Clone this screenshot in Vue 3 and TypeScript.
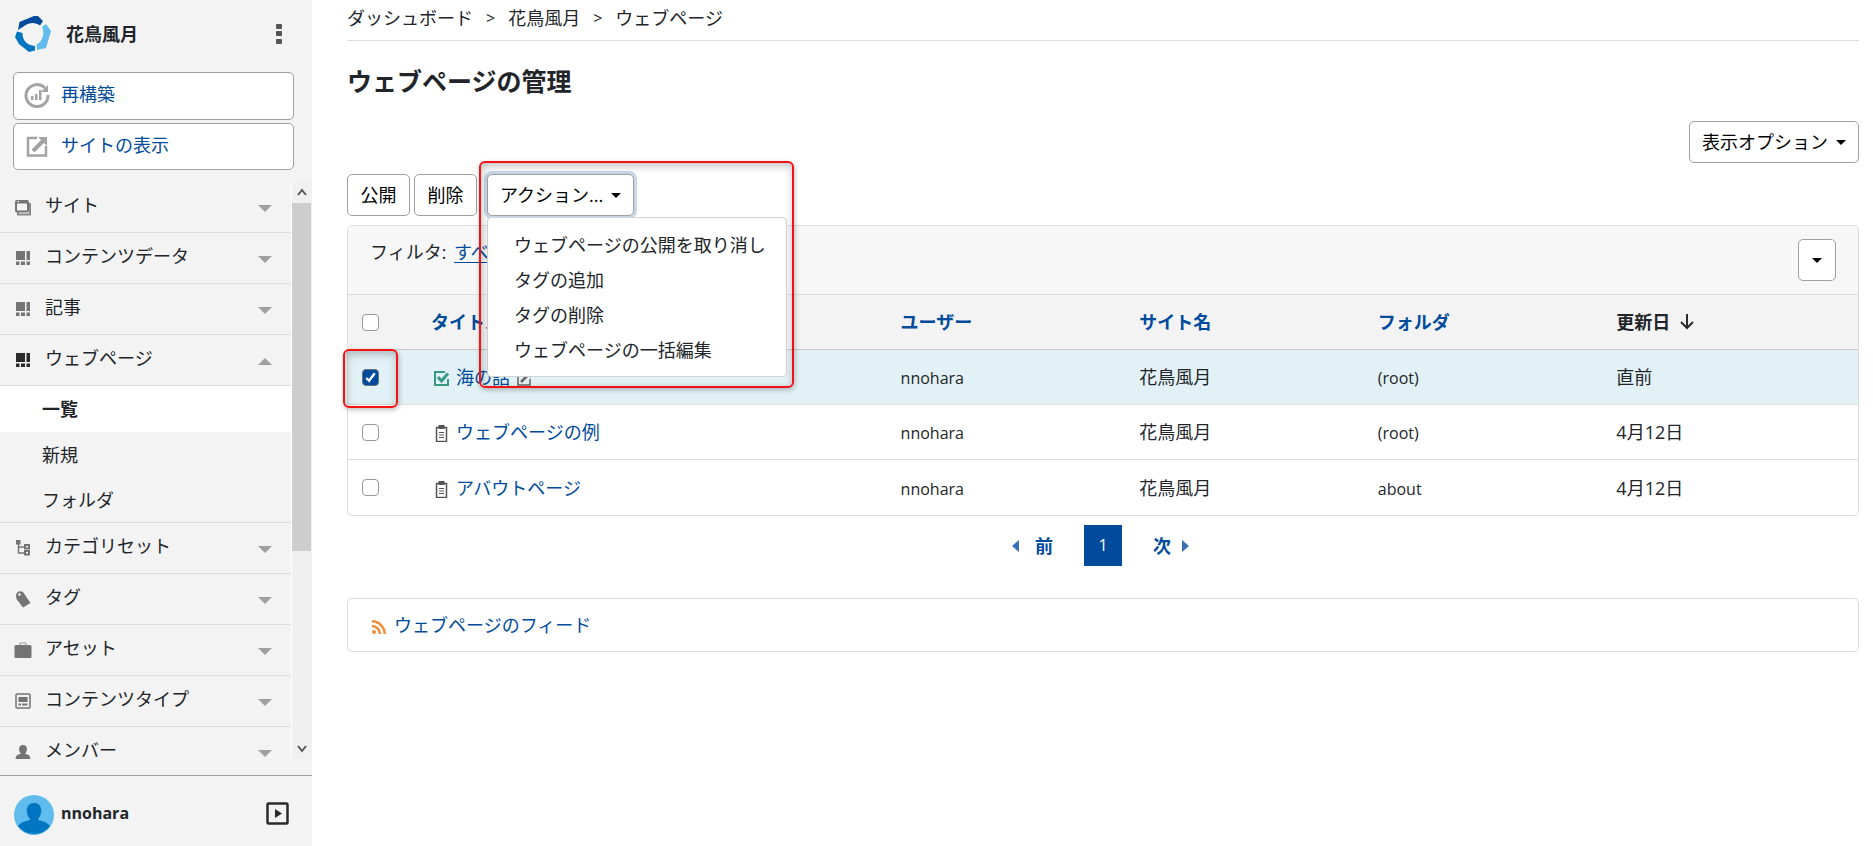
<script setup lang="ts">
import { ref } from 'vue'

interface MenuItem {
  icon: string
  label: string
  open?: boolean
  children?: { label: string; active?: boolean }[]
}

interface PageRow {
  id: number
  title: string
  published: boolean
  user: string
  site: string
  folder: string
  modified: string
  checked: boolean
}

const menu: MenuItem[] = [
  { icon: 'site', label: 'サイト' },
  { icon: 'blocks', label: 'コンテンツデータ' },
  { icon: 'blocks', label: '記事' },
  {
    icon: 'blocks',
    label: 'ウェブページ',
    open: true,
    children: [{ label: '一覧', active: true }, { label: '新規' }, { label: 'フォルダ' }],
  },
  { icon: 'tree', label: 'カテゴリセット' },
  { icon: 'tag', label: 'タグ' },
  { icon: 'asset', label: 'アセット' },
  { icon: 'type', label: 'コンテンツタイプ' },
  { icon: 'member', label: 'メンバー' },
]

const crumbs = ['ダッシュボード', '花鳥風月', 'ウェブページ']
const actions = ['ウェブページの公開を取り消し', 'タグの追加', 'タグの削除', 'ウェブページの一括編集']
const columns = ['ユーザー', 'サイト名', 'フォルダ']

const rows = ref<PageRow[]>([
  { id: 1, title: '海の話', published: true, user: 'nnohara', site: '花鳥風月', folder: '(root)', modified: '直前', checked: true },
  { id: 2, title: 'ウェブページの例', published: false, user: 'nnohara', site: '花鳥風月', folder: '(root)', modified: '4月12日', checked: false },
  { id: 3, title: 'アバウトページ', published: false, user: 'nnohara', site: '花鳥風月', folder: 'about', modified: '4月12日', checked: false },
])
</script>

<template>
  <div class="layout">
    <aside class="sidebar">
      <div class="brand">
        <svg class="logo" viewBox="0 0 36 36" aria-hidden="true">
          <path fill="#004b9b" d="M3 14 4.500 6 19 0h4l5 5-3 4.500C21 6 14 6 10 9.500Z" />
          <path fill="#5fbcec" d="M27 11l4-3 5 7-5 17-9 2-.5-5.500C28 25 30 17 27 11Z" />
          <path fill="#0075c1" d="M2 15.500l5.500 1.500C7 24 12 29.500 20 30v4.500L14 36 4 28 0 21Z" />
        </svg>
        <strong class="brand-name">花鳥風月</strong>
        <button class="plain kebab" type="button" aria-label="メニュー">
          <svg viewBox="0 0 6 22" aria-hidden="true">
            <g fill="#555"><rect y="1" width="6" height="5" rx="1" /><rect y="8" width="6" height="5" rx="1" /><rect y="16" width="6" height="5" rx="1" /></g>
          </svg>
        </button>
      </div>

      <div class="quick">
        <a class="quick-link" href="#">
          <svg viewBox="0 0 26 26" aria-hidden="true">
            <path d="M21 6A11 11 0 1 0 24 13" fill="none" stroke="#a3a3a3" stroke-width="3" />
            <path d="M24 3v7h-7Z" fill="#a3a3a3" />
            <path d="M7 14h2.500v4H7Zm4-2h2.500v6H11Zm4-4h2.500v10H15Z" fill="#a3a3a3" />
          </svg>
          <span>再構築</span>
        </a>
        <a class="quick-link" href="#">
          <svg viewBox="0 0 26 26" aria-hidden="true">
            <path d="M13 5H4v17.500h18V13" fill="none" stroke="#a3a3a3" stroke-width="2.500" />
            <path d="M9 18 19 8" fill="none" stroke="#a3a3a3" stroke-width="4" />
            <path d="M14 4h9v9Z" fill="#a3a3a3" />
          </svg>
          <span>サイトの表示</span>
        </a>
      </div>

      <div class="scroller">
        <nav class="menu">
          <ul>
            <li v-for="item in menu" :key="item.label">
              <button class="plain menu-item" :class="{ open: item.open }" type="button" :aria-expanded="!!item.open">
                <svg class="menu-icon" viewBox="0 0 18 18" aria-hidden="true">
                  <template v-if="item.icon === 'site'">
                    <path d="M4 14v2.500h12V6h-2" fill="none" stroke="#8a8a8a" stroke-width="2" />
                    <rect x="2" y="3" width="12" height="10.500" rx="1" fill="#f3f3f3" stroke="#747474" stroke-width="2" />
                    <path d="M2 4.500h12" stroke="#747474" stroke-width="2" />
                    <path d="M3.500 3.500h1.500" stroke="#fff" />
                  </template>
                  <path v-else-if="item.icon === 'blocks'" d="M2 2h9v9H2Zm10.500 0H16v9h-3.500ZM2 12.500h3.500V16H2Zm5 0h4V16H7Zm5.500 0H16V16h-3.500Z" fill="currentColor" />
                  <template v-else-if="item.icon === 'tree'">
                    <path d="M2 1h4.500v4.500H2Z" fill="currentColor" />
                    <path d="M4.500 5v9H10M4.500 8H10" fill="none" stroke="currentColor" stroke-width="1.500" />
                    <path d="M11 6h4v3.500h-4Zm0 6h4v3.500h-4Z" fill="none" stroke="currentColor" stroke-width="2" />
                  </template>
                  <template v-else-if="item.icon === 'tag'">
                    <path d="M2 5.500C2 2 6 0 9 2l7.500 11L9 17.500 2.500 9Z" fill="currentColor" />
                    <circle cx="5.500" cy="4.500" r="1.300" fill="#f3f3f3" />
                  </template>
                  <template v-else-if="item.icon === 'asset'">
                    <path d="M6 4.500V2h6v2.500" fill="none" stroke="#999" />
                    <rect x="0.500" y="4" width="17" height="13" rx="1.500" fill="currentColor" />
                  </template>
                  <template v-else-if="item.icon === 'type'">
                    <rect x="2" y="2" width="14" height="14" rx="1" fill="none" stroke="currentColor" stroke-width="1.500" />
                    <path d="M4.500 5h9v5h-9Zm0 6.500h2.500v2H4.500Zm3.500 0h5.500v2H8Z" fill="currentColor" />
                  </template>
                  <path v-else d="M9 2c5 0 4.500 6 2.500 8v1c3 .5 5 1.500 5 6h-15c0-4.500 2-5.500 5-6v-1C4.500 8 4 2 9 2Z" fill="currentColor" />
                </svg>
                <span class="menu-label">{{ item.label }}</span>
                <svg class="chevron" viewBox="0 0 14 7" aria-hidden="true">
                  <path :d="item.open ? 'M0 7 7 0l7 7Z' : 'M0 0h14L7 7Z'" fill="#a0a0a0" />
                </svg>
              </button>
              <ul v-if="item.children" class="submenu">
                <li v-for="child in item.children" :key="child.label">
                  <a href="#" class="sub-link" :class="{ active: child.active }">{{ child.label }}</a>
                </li>
              </ul>
            </li>
          </ul>
        </nav>
        <div class="track" aria-hidden="true">
          <svg class="arrow" viewBox="0 0 20 21"><path d="m6 13 4-5 4 5" fill="none" stroke="#555" stroke-width="2" /></svg>
          <div class="thumb-area"><div class="thumb"></div></div>
          <svg class="arrow" viewBox="0 0 20 21"><path d="m6 8 4 5 4-5" fill="none" stroke="#555" stroke-width="2" /></svg>
        </div>
      </div>

      <div class="account">
        <svg class="avatar" viewBox="0 0 40 40" aria-hidden="true">
          <circle cx="20" cy="20" r="20" fill="#5fbcec" />
          <path d="M20 8c6 0 8 5 7 10-.5 3-2 5-3 6v1c5 1 10 3 12 6a20 20 0 0 1-32 0c2-3 7-5 12-6v-1c-1-1-2.500-3-3-6-1-5 1-10 7-10Z" fill="#0075c1" />
        </svg>
        <strong class="account-name">nnohara</strong>
        <button class="plain collapse" type="button" aria-label="サイドバーを閉じる">
          <svg viewBox="0 0 23 23" aria-hidden="true">
            <rect x="1.500" y="1.500" width="20" height="20" rx="1" fill="none" stroke="#2b2b2b" stroke-width="2.500" />
            <path d="M9 7v9l7-4.500Z" fill="#2b2b2b" />
          </svg>
        </button>
      </div>
    </aside>

    <main class="main">
      <nav class="crumbs">
        <template v-for="(crumb, i) in crumbs" :key="crumb">
          <span v-if="i" class="sep">&gt;</span>
          <a href="#">{{ crumb }}</a>
        </template>
      </nav>

      <h1>ウェブページの管理</h1>

      <div class="options">
        <button class="btn" type="button">表示オプション<span class="caret"></span></button>
      </div>

      <div class="toolbar">
        <button class="btn" type="button">公開</button>
        <button class="btn" type="button">削除</button>
        <div class="action">
          <button class="btn focused" type="button" aria-expanded="true">アクション...<span class="caret"></span></button>
          <ul class="dropdown">
            <li v-for="action in actions" :key="action"><button class="plain" type="button">{{ action }}</button></li>
          </ul>
          <div class="callout callout-menu"></div>
        </div>
      </div>

      <section class="card">
        <div class="filter">
          <p>フィルタ: <a href="#">すべて</a></p>
          <button class="btn square" type="button" aria-label="フィルタを開く"><span class="caret"></span></button>
        </div>
        <table>
          <colgroup>
            <col class="c-check" />
            <col class="c-title" />
            <col class="c-data" /><col class="c-data" /><col class="c-data" />
            <col />
          </colgroup>
          <thead>
            <tr>
              <th class="check"><input type="checkbox" aria-label="すべて選択" /></th>
              <th><a href="#">タイトル</a></th>
              <th v-for="column in columns" :key="column"><a href="#">{{ column }}</a></th>
              <th>
                <span class="sorted">更新日
                  <svg viewBox="0 0 14 16" aria-hidden="true"><path d="M7 0v14M1 8l6 6 6-6" fill="none" stroke="#2b2b2b" stroke-width="2" /></svg>
                </span>
              </th>
            </tr>
          </thead>
          <tbody>
            <tr v-for="row in rows" :key="row.id" :class="{ selected: row.checked }">
              <td class="check">
                <input v-model="row.checked" type="checkbox" :aria-label="row.title" />
                <div v-if="row.id === 1" class="callout callout-check"></div>
              </td>
              <td>
                <span class="title">
                  <svg v-if="row.published" class="status" viewBox="0 0 17 17" aria-hidden="true">
                    <path d="M12 2H2v13h13V9" fill="none" stroke="#3a9a80" stroke-width="2" />
                    <path d="m5 7 3.500 4L15 3.500" fill="none" stroke="#3a9a80" stroke-width="3" />
                  </svg>
                  <svg v-else class="status" viewBox="0 0 17 17" aria-hidden="true">
                    <rect x="3.500" y="2.500" width="10" height="14" fill="none" stroke="#555" stroke-width="1.500" />
                    <path d="M5.500 0h6v4h-6Z" fill="#555" />
                    <path d="M6 7.500h5M6 10h5M6 12.500h5" stroke="#555" />
                  </svg>
                  <a href="#">{{ row.title }}</a>
                  <svg v-if="row.published" class="edit" viewBox="0 0 14 14" aria-hidden="true">
                    <path d="M7 1H1v12h12V7" fill="none" stroke="#666" stroke-width="1.500" />
                    <path d="m4 10 7-7" stroke="#666" stroke-width="2.500" />
                    <path d="M8 0h6v6Z" fill="#666" />
                  </svg>
                </span>
              </td>
              <td class="latin">{{ row.user }}</td>
              <td>{{ row.site }}</td>
              <td class="latin">{{ row.folder }}</td>
              <td>{{ row.modified }}</td>
            </tr>
          </tbody>
        </table>
      </section>

      <nav class="pager">
        <a class="prev" href="#"><svg viewBox="0 0 7 12" aria-hidden="true"><path d="M7 0v12L0 6Z" fill="#3a6fb5" /></svg>前</a>
        <span class="current">1</span>
        <a class="next" href="#">次<svg viewBox="0 0 7 12" aria-hidden="true"><path d="M0 0v12l7-6Z" fill="#3a6fb5" /></svg></a>
      </nav>

      <section class="feed">
        <svg viewBox="0 0 14 14" aria-hidden="true">
          <circle cx="2" cy="12" r="2" fill="#f28c38" />
          <path d="M0 6a8 8 0 0 1 8 8M0 1.300A12.700 12.700 0 0 1 12.700 14" fill="none" stroke="#f28c38" stroke-width="2.500" />
        </svg>
        <a href="#">ウェブページのフィード</a>
      </section>
    </main>
  </div>
</template>

<style>
body {
  margin: 0;
  background: #fff;
}
</style>

<style scoped>
.layout {
  display: flex;
  min-height: 100vh;
  font: 18px/28px "Open Sans", "Noto Sans CJK JP", sans-serif;
  color: #212529;
}
.layout *,
.layout *::before {
  box-sizing: border-box;
}
a {
  color: #004b9b;
  text-decoration: none;
}
ul {
  list-style: none;
  margin: 0;
  padding: 0;
}
svg {
  display: block;
  flex: none;
}
.plain {
  border: 0;
  padding: 0;
  background: none;
  font: inherit;
  color: inherit;
  text-align: left;
  cursor: pointer;
}

.sidebar {
  display: flex;
  flex-direction: column;
  flex: none;
  width: 312px;
  height: 100vh;
  background: #f3f3f3;
}
.brand {
  display: flex;
  align-items: center;
  height: 68px;
  padding: 0 30px 0 15px;
}
.logo {
  width: 36px;
  height: 36px;
}
.brand-name {
  flex: 1;
  margin-left: 15px;
}
.kebab svg {
  width: 6px;
  height: 22px;
}
.quick {
  display: grid;
  gap: 3px;
  padding: 4px 18px 12px 13px;
}
.quick-link {
  display: flex;
  align-items: center;
  gap: 11px;
  height: 48px;
  padding: 0 10px 2px;
  border: 1px solid #a0a0a0;
  border-radius: 5px;
  background: #fff;
}
.quick-link + .quick-link {
  height: 47px;
}
.quick-link svg {
  width: 26px;
  height: 26px;
}
.quick-link span {
  padding-bottom: 2px;
}
.scroller {
  display: flex;
  flex: 1;
  min-height: 0;
  overflow: hidden;
}
.menu {
  flex: 1;
  overflow: hidden;
}
.menu > ul > li {
  border-bottom: 1px solid #dcdcdc;
}
.menu-item {
  display: flex;
  align-items: center;
  width: 100%;
  height: 50px;
  padding: 0 19px 0 14px;
}
.menu-icon {
  width: 18px;
  height: 18px;
  color: #747474;
}
.open .menu-icon {
  color: #2b2b2b;
}
.menu-label {
  flex: 1;
  margin-left: 13px;
  padding-bottom: 4px;
  line-height: 18px;
}
.chevron {
  width: 14px;
  height: 7px;
  margin-top: 2px;
}
.submenu {
  border-top: 1px solid #dcdcdc;
}
.sub-link {
  display: block;
  padding: 9px 42px 8px;
  color: inherit;
}
.sub-link.active {
  padding-bottom: 9px;
  background: #fff;
  font-weight: 700;
}
.track {
  display: flex;
  flex-direction: column;
  width: 21px;
  border-left: 1px solid #fff;
  background: #f0f0f0;
}
.arrow {
  width: 20px;
  height: 21px;
}
.thumb-area {
  flex: 1;
}
.thumb {
  height: 65%;
  margin-right: 1px;
  background: #cdcdcd;
}
.account {
  display: flex;
  align-items: center;
  height: 71px;
  margin-top: 16px;
  padding: 4px 23px 0 14px;
  border-top: 1px solid #a0a0a0;
}
.avatar {
  width: 40px;
  height: 40px;
  margin-top: 4px;
}
.account-name {
  flex: 1;
  margin-left: 7px;
  font-size: 16px;
}
.collapse svg {
  width: 23px;
  height: 23px;
}

.main {
  flex: 1;
  min-width: 0;
  padding: 0 14px 0 35px;
}
.crumbs {
  display: flex;
  gap: 13px;
  height: 41px;
  padding-top: 4px;
  border-bottom: 1px solid #dcdcdc;
}
.crumbs a {
  color: inherit;
}
.sep {
  font-size: 16px;
}
h1 {
  margin: 24px 0;
  font-size: 25px;
  line-height: 32px;
}
.options {
  display: flex;
  justify-content: flex-end;
}
.btn {
  display: inline-flex;
  align-items: center;
  justify-content: center;
  gap: 8px;
  min-width: 63px;
  height: 42px;
  padding: 0 12px;
  border: 1px solid #a0a0a0;
  border-radius: 5px;
  background: #fff;
  font: inherit;
  color: #000;
  white-space: nowrap;
  cursor: pointer;
}
.caret {
  border: 5px solid transparent;
  border-top-color: #000;
  border-bottom: 0;
}
.toolbar {
  display: flex;
  gap: 4px;
  margin: 11px 0 9px;
}
.action {
  position: relative;
  margin-left: 6px;
}
.focused {
  box-shadow: 0 0 0 3px #c7d6e8;
}
.dropdown {
  position: absolute;
  z-index: 2;
  top: 43px;
  left: 0;
  width: 300px;
  padding: 9px 0;
  border: 1px solid #d3d3d3;
  border-radius: 4px;
  background: #fff;
}
.dropdown .plain {
  display: block;
  width: 100%;
  height: 35px;
  padding-left: 26px;
  white-space: nowrap;
}
.callout {
  position: absolute;
  z-index: 3;
  border: 2px solid #f21414;
  border-radius: 6px;
  box-shadow: 1px 2px 5px rgba(0, 0, 0, 0.25), inset 1px 3px 8px rgba(0, 0, 0, 0.25);
  pointer-events: none;
}
.callout-menu {
  top: -13px;
  left: -8px;
  width: 315px;
  height: 227px;
}
.card {
  border: 1px solid #dcdcdc;
  border-radius: 5px;
}
.filter {
  display: flex;
  justify-content: space-between;
  height: 69px;
  padding: 12px 22px 0;
  border-bottom: 1px solid #dcdcdc;
  border-radius: 5px 5px 0 0;
  background: #f7f7f7;
}
.filter p {
  margin: 0;
}
.filter a {
  margin-left: 3px;
  text-decoration: underline;
  text-underline-offset: 3px;
}
.square {
  width: 38px;
  min-width: 0;
  margin-top: 1px;
}
table {
  width: 100%;
  table-layout: fixed;
  border-collapse: separate;
  border-spacing: 0;
}
.c-check {
  width: 71px;
}
.c-title {
  width: 31.1%;
}
.c-data {
  width: 15.8%;
}
th,
td {
  height: 55px;
  padding: 0 12px;
  border-bottom: 1px solid #dcdcdc;
  text-align: left;
}
th {
  border-bottom-color: #c8c8c8;
  background: #f3f3f3;
}
tbody tr:last-child td {
  border-bottom: 0;
}
.selected td {
  background: #e2f1f5;
}
.check {
  position: relative;
  padding: 0 14px;
}
.check input {
  display: block;
  appearance: none;
  width: 17px;
  height: 17px;
  margin: 0;
  border: 1px solid #999;
  border-radius: 4px;
  background: #fff;
}
.check input:checked {
  border-color: #6a7480;
  background: #004b9b url("data:image/svg+xml,%3Csvg xmlns='http://www.w3.org/2000/svg' viewBox='0 0 16 16'%3E%3Cpath d='m3.500 8.500 3 3 6-8' fill='none' stroke='%23fff' stroke-width='2.500'/%3E%3C/svg%3E") center / 100% no-repeat;
}
.callout-check {
  top: -1px;
  left: -5px;
  width: 55px;
  height: 59px;
}
.title {
  display: flex;
  align-items: center;
}
.status {
  width: 17px;
  height: 17px;
  margin: 3px 6px 0 2px;
}
.edit {
  width: 14px;
  height: 14px;
  margin: 3px 0 0 7px;
}
.latin {
  padding-top: 2px;
  font-size: 16px;
}
.sorted {
  display: flex;
  align-items: center;
  gap: 10px;
}
.sorted svg {
  width: 14px;
  height: 16px;
}
.pager {
  display: grid;
  grid-template-columns: 1fr auto 1fr;
  align-items: center;
  gap: 31px;
  margin: 9px 0 32px;
  font-weight: 700;
}
.pager a {
  display: flex;
  align-items: center;
}
.pager svg {
  width: 7px;
  height: 12px;
}
.prev {
  justify-content: flex-end;
  gap: 16px;
}
.next {
  gap: 11px;
}
.current {
  width: 38px;
  background: #004b9b;
  color: #fff;
  font-size: 16px;
  font-weight: 400;
  line-height: 41px;
  text-align: center;
}
.feed {
  display: flex;
  align-items: center;
  gap: 8px;
  height: 54px;
  padding: 0 24px;
  border: 1px solid #dcdcdc;
  border-radius: 5px;
}
.feed svg {
  width: 14px;
  height: 14px;
  margin-top: 3px;
}
</style>
